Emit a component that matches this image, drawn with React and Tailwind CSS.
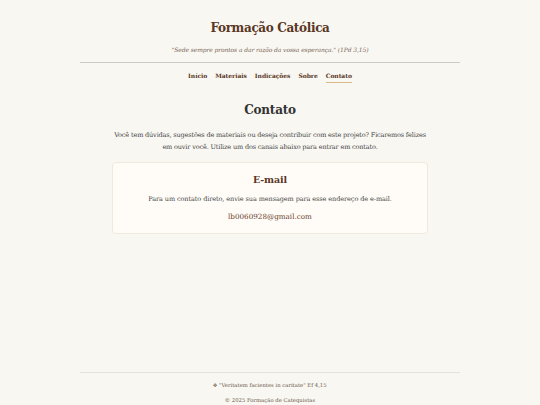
import React from 'react';

const links = ['Início', 'Materiais', 'Indicações', 'Sobre', 'Contato'];

export default function App() {
  return (
    <div className="min-h-[410px] bg-[#f9f7f2] flex flex-col font-['DejaVu_Serif',serif]">
      <div className="mx-auto w-[380px] flex flex-col flex-1">
        {/* header */}
        <header className="pt-[18px] text-center">
          <h1 className="text-[12px] leading-[20px] font-bold tracking-[-0.35px] text-[#5a3624]">Formação Católica</h1>
          <p className="mt-[7px] text-[6px] leading-[10px] italic tracking-[-0.1px] text-[#7a6656]">
            "Sede sempre prontos a dar razão da vossa esperança." (1Pd 3,15)
          </p>
          <div className="mt-[7px] border-t border-[#cfcac3]" />
          <nav className="mt-[8px] flex justify-center gap-[8px] text-[6px] leading-[10px] font-bold tracking-[-0.05px] text-[#5a3624]">
            {links.map((l) => (
              <a key={l} className={l === 'Contato' ? 'border-b border-[#d9b98a] pb-[1px]' : ''}>{l}</a>
            ))}
          </nav>
        </header>

        {/* content */}
        <main className="flex-1 pt-[17px] text-center">
          <h2 className="text-[12px] leading-[20px] font-bold tracking-[-0.2px] text-[#333333]">Contato</h2>
          <p className="mt-[9px] px-[30px] text-[6.5px] leading-[12px] tracking-[-0.15px] text-[#444444]">
            Você tem dúvidas, sugestões de materiais ou deseja contribuir com este projeto? Ficaremos felizes em ouvir você. Utilize um dos canais abaixo para entrar em contato.
          </p>
          <section className="mt-[9px] mx-[32px] rounded-[4px] border border-[#efe8dd] bg-[#fffcf7] pt-[9px] pb-[10px]">
            <h3 className="text-[9.5px] leading-[16px] font-bold tracking-[-0.1px] text-[#5a3624]">E-mail</h3>
            <p className="mt-[5px] text-[6.5px] leading-[12px] tracking-[-0.08px] text-[#444444]">
              Para um contato direto, envie sua mensagem para esse endereço de e-mail.
            </p>
            <p className="mt-[6px] text-[7.2px] leading-[12px] text-[#6e3f2c]">lb0060928@gmail.com</p>
          </section>
        </main>

        {/* footer */}
        <footer className="border-t border-[#e6e1d9] pt-[5px] pb-[2px] text-center text-[5.3px] leading-[15px] text-[#6b5849]">
          <p>✥ "Veritatem facientes in caritate" Ef 4,15</p>
          <p>© 2025 Formação de Catequistas</p>
        </footer>
      </div>
    </div>
  );
}
